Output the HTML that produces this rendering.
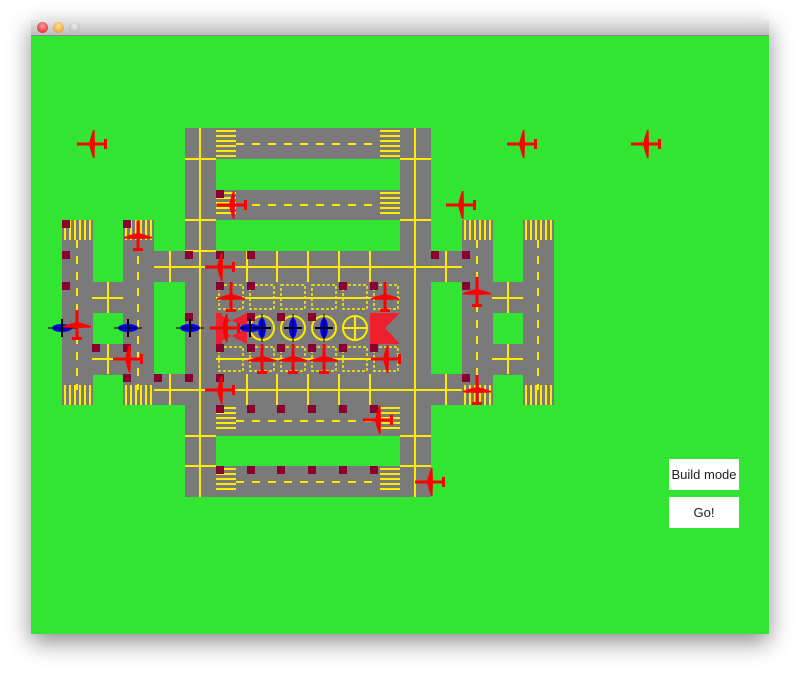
<!DOCTYPE html>
<html><head><meta charset="utf-8"><style>
html,body{margin:0;padding:0;background:#fff;width:800px;height:677px;overflow:hidden;font-family:"Liberation Sans",sans-serif}
.win{position:absolute;left:31px;top:20px;width:738px;height:614px;box-shadow:0 8px 22px rgba(0,0,0,.45)}
.tb{position:absolute;left:0;top:0;width:738px;height:15px;background:linear-gradient(#e8e8e8,#bcbcbc);border-bottom:1px solid #888}
.dot{position:absolute;top:2px;width:11px;height:11px;border-radius:50%}
.green{position:absolute;left:0;top:16px;width:738px;height:598px;background:#33e533}
.btn{position:absolute;left:638px;width:70px;height:31px;background:#fff;font-size:13px;color:#222;text-align:center;line-height:31px}
svg{position:absolute;left:0;top:0}
</style></head><body>
<div class="win">
<div class="tb"><div class="dot" style="left:6px;background:radial-gradient(circle at 50% 35%,#ff9a9a,#d3171b)"></div><div class="dot" style="left:22px;background:radial-gradient(circle at 50% 35%,#ffe39a,#e0901a)"></div><div class="dot" style="left:38px;background:radial-gradient(circle at 50% 35%,#eee,#aaa)"></div></div>
<div class="green"></div>
<div class="btn" style="top:439px">Build mode</div>
<div class="btn" style="top:477px">Go!</div>
</div>
<svg width="800" height="677" viewBox="0 0 800 677">
<defs>
<g id="pl"><rect x="-15" y="-1.5" width="30" height="3" fill="#f00"/><path d="M-3,0 Q-2,-5 1,-14 L2.5,-14 L3,0 L2.5,14 L1,14 Q-2,5 -3,0Z" fill="#f00"/><rect x="12" y="-5" width="3" height="10" fill="#f00"/></g>
<g id="bp"><ellipse cx="0" cy="0" rx="10" ry="4" fill="#00f"/><rect x="-1" y="-9" width="2" height="18" fill="#000"/><rect x="-14" y="-0.5" width="28" height="1" fill="#000"/></g>
</defs>
<g fill="#7a7a7a">
<rect x="185" y="128" width="246" height="31"/><rect x="185" y="190" width="246" height="30"/>
<rect x="185" y="128" width="31" height="369"/><rect x="400" y="128" width="31" height="369"/>
<rect x="185" y="251" width="246" height="154"/>
<rect x="154" y="251" width="308" height="31"/><rect x="154" y="374" width="308" height="31"/>
<rect x="185" y="405" width="246" height="31"/><rect x="185" y="466" width="246" height="31"/>
<rect x="62" y="220" width="31" height="185"/><rect x="123" y="220" width="31" height="185"/>
<rect x="92" y="282" width="31" height="31"/><rect x="92" y="344" width="31" height="31"/>
<rect x="462" y="220" width="31" height="185"/><rect x="523" y="220" width="31" height="185"/>
<rect x="492" y="282" width="31" height="31"/><rect x="492" y="344" width="31" height="31"/>
</g>
<g stroke="#ffea00" stroke-width="2" fill="none">
<path d="M154,267H462M154,390H462M200,128V497M415,128V497M92,298H123M92,359H123M492,298H523M492,359H523M216,298H400M216,359H400"/>
<path d="M185,159H216M185,220H216M185,251H216M185,436H216M185,466H216M400,159H431M400,220H431M400,436H431M400,466H431M247,251V282M277,251V282M308,251V282M339,251V282M370,251V282M247,374V405M277,374V405M308,374V405M339,374V405M370,374V405M170,251V282M170,374V405M446,251V282M446,374V405M108,282V313M108,344V374M508,282V313M508,344V374"/>
<path stroke-dasharray="8,8" d="M236,144H380M236,205H380M236,421H380M236,482H380M77,240V390M138,240V390M477,240V390M538,240V390"/>
<path stroke-dasharray="3,2" stroke-width="1.5" d="M219,285h24v24h-24zM250,285h24v24h-24zM281,285h24v24h-24zM312,285h24v24h-24zM343,285h24v24h-24zM374,285h24v24h-24zM219,347h24v24h-24zM250,347h24v24h-24zM281,347h24v24h-24zM312,347h24v24h-24zM343,347h24v24h-24zM374,347h24v24h-24z"/>
<circle cx="262" cy="328" r="12"/><circle cx="293" cy="328" r="12"/><circle cx="324" cy="328" r="12"/><circle cx="355" cy="328" r="12"/>
<path d="M355,316V340M343,328H367"/>
</g>
<g fill="#ffea00">
<path d="M216,130h20v2h-20zM216,135h20v2h-20zM216,140h20v2h-20zM216,145h20v2h-20zM216,150h20v2h-20zM216,155h20v2h-20zM380,130h20v2h-20zM380,135h20v2h-20zM380,140h20v2h-20zM380,145h20v2h-20zM380,150h20v2h-20zM380,155h20v2h-20z"/>
<path d="M216,192h20v2h-20zM216,197h20v2h-20zM216,202h20v2h-20zM216,207h20v2h-20zM216,212h20v2h-20zM380,192h20v2h-20zM380,197h20v2h-20zM380,202h20v2h-20zM380,207h20v2h-20zM380,212h20v2h-20z"/>
<path d="M216,407h20v2h-20zM216,412h20v2h-20zM216,417h20v2h-20zM216,422h20v2h-20zM216,427h20v2h-20zM380,407h20v2h-20zM380,412h20v2h-20zM380,417h20v2h-20zM380,422h20v2h-20zM380,427h20v2h-20z"/>
<path d="M216,468h20v2h-20zM216,473h20v2h-20zM216,478h20v2h-20zM216,483h20v2h-20zM216,488h20v2h-20zM380,468h20v2h-20zM380,473h20v2h-20zM380,478h20v2h-20zM380,483h20v2h-20zM380,488h20v2h-20z"/>
<path d="M64,220h2v20h-2zM69,220h2v20h-2zM74,220h2v20h-2zM79,220h2v20h-2zM84,220h2v20h-2zM89,220h2v20h-2zM125,220h2v20h-2zM130,220h2v20h-2zM135,220h2v20h-2zM140,220h2v20h-2zM145,220h2v20h-2zM150,220h2v20h-2zM464,220h2v20h-2zM469,220h2v20h-2zM474,220h2v20h-2zM479,220h2v20h-2zM484,220h2v20h-2zM489,220h2v20h-2zM525,220h2v20h-2zM530,220h2v20h-2zM535,220h2v20h-2zM540,220h2v20h-2zM545,220h2v20h-2zM550,220h2v20h-2z"/>
<path d="M64,385h2v20h-2zM69,385h2v20h-2zM74,385h2v20h-2zM79,385h2v20h-2zM84,385h2v20h-2zM89,385h2v20h-2zM125,385h2v20h-2zM130,385h2v20h-2zM135,385h2v20h-2zM140,385h2v20h-2zM145,385h2v20h-2zM150,385h2v20h-2zM464,385h2v20h-2zM469,385h2v20h-2zM474,385h2v20h-2zM479,385h2v20h-2zM484,385h2v20h-2zM489,385h2v20h-2zM525,385h2v20h-2zM530,385h2v20h-2zM535,385h2v20h-2zM540,385h2v20h-2zM545,385h2v20h-2zM550,385h2v20h-2z"/>
</g>
<g fill="#ee2030"><path d="M216,313L247,328L216,344ZM247,313L216,328L247,344ZM216,313h6v31h-6z"/><path d="M370,313H400L385,328L400,344H370Z"/></g>
<g fill="#8b0030">
<rect x="62" y="220" width="8" height="8"/><rect x="123" y="220" width="8" height="8"/><rect x="62" y="251" width="8" height="8"/><rect x="185" y="251" width="8" height="8"/><rect x="216" y="251" width="8" height="8"/><rect x="247" y="251" width="8" height="8"/><rect x="431" y="251" width="8" height="8"/><rect x="462" y="251" width="8" height="8"/>
<rect x="62" y="282" width="8" height="8"/><rect x="216" y="282" width="8" height="8"/><rect x="247" y="282" width="8" height="8"/><rect x="339" y="282" width="8" height="8"/><rect x="370" y="282" width="8" height="8"/><rect x="462" y="282" width="8" height="8"/>
<rect x="185" y="313" width="8" height="8"/><rect x="247" y="313" width="8" height="8"/><rect x="277" y="313" width="8" height="8"/><rect x="308" y="313" width="8" height="8"/>
<rect x="92" y="344" width="8" height="8"/><rect x="123" y="344" width="8" height="8"/><rect x="216" y="344" width="8" height="8"/><rect x="247" y="344" width="8" height="8"/><rect x="277" y="344" width="8" height="8"/><rect x="308" y="344" width="8" height="8"/><rect x="339" y="344" width="8" height="8"/><rect x="370" y="344" width="8" height="8"/>
<rect x="123" y="374" width="8" height="8"/><rect x="154" y="374" width="8" height="8"/><rect x="185" y="374" width="8" height="8"/><rect x="216" y="374" width="8" height="8"/><rect x="462" y="374" width="8" height="8"/>
<rect x="216" y="405" width="8" height="8"/><rect x="247" y="405" width="8" height="8"/><rect x="277" y="405" width="8" height="8"/><rect x="308" y="405" width="8" height="8"/><rect x="339" y="405" width="8" height="8"/><rect x="370" y="405" width="8" height="8"/>
<rect x="216" y="466" width="8" height="8"/><rect x="247" y="466" width="8" height="8"/><rect x="277" y="466" width="8" height="8"/><rect x="308" y="466" width="8" height="8"/><rect x="339" y="466" width="8" height="8"/><rect x="370" y="466" width="8" height="8"/><rect x="216" y="190" width="8" height="8"/>
</g>
<use href="#bp" x="62" y="328"/><use href="#bp" x="128" y="328"/><use href="#bp" x="190" y="328"/><use href="#bp" x="250" y="328"/>
<use href="#bp" transform="translate(262,328) rotate(90)"/><use href="#bp" transform="translate(293,328) rotate(90)"/><use href="#bp" transform="translate(324,328) rotate(90)"/>
<use href="#pl" x="92" y="144"/><use href="#pl" x="522" y="144"/><use href="#pl" x="646" y="144"/>
<use href="#pl" x="232" y="205"/><use href="#pl" x="461" y="205"/><use href="#pl" x="220" y="267"/>
<use href="#pl" x="378" y="420"/><use href="#pl" x="430" y="482"/><use href="#pl" x="220" y="390"/><use href="#pl" x="128" y="359"/>
<use href="#pl" x="225" y="328"/><use href="#pl" x="386" y="359"/>
<use href="#pl" transform="translate(138,236) rotate(90)"/><use href="#pl" transform="translate(231,297) rotate(90)"/><use href="#pl" transform="translate(385,297) rotate(90)"/>
<use href="#pl" transform="translate(477,292) rotate(90)"/><use href="#pl" transform="translate(77,325) rotate(90)"/><use href="#pl" transform="translate(477,390) rotate(90)"/>
<use href="#pl" transform="translate(262,359) rotate(90)"/><use href="#pl" transform="translate(293,359) rotate(90)"/><use href="#pl" transform="translate(324,359) rotate(90)"/>
</svg>
</body></html>
